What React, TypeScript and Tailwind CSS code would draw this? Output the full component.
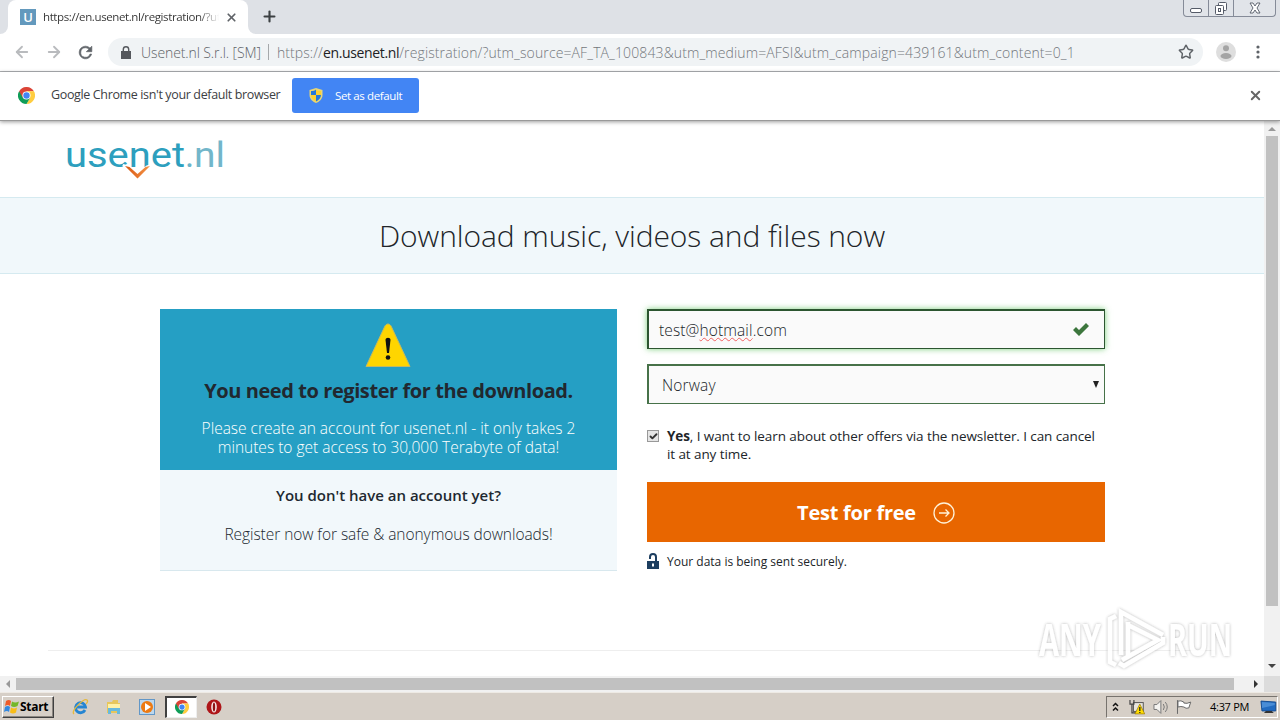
import type { ReactNode } from "react";
import { ArrowLeft, ArrowRight, Check, Plus, Star, X } from "lucide-react";

function ChromeLogo({ size }: { size: number }) {
  return (
    <svg width={size} height={size} viewBox="0 0 48 48" className="shrink-0">
      <path d="M24 24 3.2 12A24 24 0 0 1 44.8 12H24z" fill="#db4437" />
      <path d="M24 24 44.8 12A24 24 0 0 1 24 48L34.4 30z" fill="#ffcd40" />
      <path d="M3.2 12A24 24 0 0 0 24 48L34.4 30 24 24z" fill="#0f9d58" />
      <path d="M24 12H44.8L46 16 34.4 30z" fill="#ffcd40" />
      <path d="M3.2 12 13.6 30 24 24V12z" fill="#db4437" />
      <circle cx="24" cy="24" r="11.5" fill="#fff" />
      <circle cx="24" cy="24" r="9" fill="#4285f4" />
    </svg>
  );
}

function TabStrip() {
  return (
    <div className="flex h-[34px] items-start bg-[#dee1e6]">
      <div className="flex h-[34px] w-2 items-end bg-white">
        <div className="h-full w-full rounded-br-lg bg-[#dee1e6]" />
      </div>
      <div className="flex h-full w-[240px] items-center rounded-t-lg bg-white pl-3">
        <div className="flex size-4 shrink-0 items-center justify-center bg-[#6399bd] text-[13px] leading-4 font-semibold text-white">
          U
        </div>
        <div className="ml-[7px] w-[176px] overflow-hidden bg-gradient-to-r from-[#333] from-88% to-white bg-clip-text text-[11.5px] tracking-[-0.39px] whitespace-nowrap text-transparent">
          https://en.usenet.nl/registration/?ut
        </div>
        <X size={13} strokeWidth={3.2} className="ml-[6px] shrink-0 text-[#5f6368]" />
      </div>
      <div className="h-full w-2 bg-white">
        <div className="h-full w-full rounded-bl-lg bg-[#dee1e6]" />
      </div>
      <Plus size={17} strokeWidth={3} className="mt-2 ml-[5px] text-[#3c4043]" />
      <div className="mr-1 ml-auto flex h-[17px] w-[93px] rounded-b border border-t-0 border-[#858b98] bg-[#e1e4e9]">
        <div className="flex w-[25px] justify-center border-r border-[#858b98]">
          <svg width="14" height="16" fill="#fff" stroke="#555b68">
            <rect x="1.5" y="8.5" width="11" height="4" rx="1.5" />
          </svg>
        </div>
        <div className="flex w-[25px] justify-center border-r border-[#858b98]">
          <svg width="16" height="16" fill="#fff" stroke="#555b68">
            <rect x="5.5" y="2.5" width="8" height="8" rx="1" />
            <rect x="2.5" y="5.5" width="8" height="9" rx="1" />
            <rect x="5.5" y="8.5" width="2" height="3" />
          </svg>
        </div>
        <div className="flex flex-1 justify-center">
          <svg width="14" height="16" fill="#fff" stroke="#555b68" strokeWidth=".9">
            <path d="M2 3h3l2 3 2-3h3L9 8l3 5H9l-2-3-2 3H2l3-5z" />
          </svg>
        </div>
      </div>
    </div>
  );
}

function Toolbar() {
  return (
    <div className="flex h-[38px] items-center border-b border-[#b0b2b5] bg-white pb-px">
      <ArrowLeft size={18} strokeWidth={2.4} className="ml-[13px] text-[#b9bbbe]" />
      <ArrowRight size={18} strokeWidth={2.4} className="ml-[14px] text-[#b9bbbe]" />
      <svg width="19" height="19" viewBox="0 0 24 24" className="ml-[13px]" fill="#5f6368">
        <path
          d="M17.65 6.35A7.96 7.96 0 0 0 12 4a8 8 0 1 0 7.73 10h-2.08A6 6 0 1 1 12 6c1.66 0 3.14.69 4.22 1.78L13 11h7V4z"
          stroke="#5f6368"
          strokeWidth=".8"
        />
      </svg>
      <div className="ml-[13px] flex h-7 w-[1095px] items-center rounded-full bg-[#f0f3f5] pl-[13px] text-[14px] font-light whitespace-nowrap text-[#73777c]">
        <svg width="10" height="13" viewBox="0 0 10 13" fill="#55585d">
          <path d="M0 5h10v8H0z" />
          <path d="M2.3 6V3.4a2.7 2.7 0 0 1 5.4 0V6" fill="none" stroke="#55585d" strokeWidth="1.4" />
        </svg>
        <span className="ml-[10px] w-[127px] tracking-[-0.1px] text-[#5f6368]">Usenet.nl S.r.l. [SM]</span>
        <span className="h-4 w-px bg-[#a5a8ab]" />
        <span className="ml-2 tracking-[0.07px]">
          https://<span className="font-normal tracking-[-0.35px] text-[#202124]">en.usenet.nl</span>
          <span className="tracking-[0.12px]">
            /registration/?utm_source=AF_TA_100843&amp;utm_medium=AFSI&amp;utm_campaign=439161&amp;utm_content=0_1
          </span>
        </span>
        <Star size={16} strokeWidth={2.2} className="mr-[9px] ml-auto text-[#5f6368]" />
      </div>
      <svg width="20" height="20" className="ml-[13px]" fill="#a4a4a4">
        <circle cx="10" cy="10" r="10" fill="#dedede" />
        <circle cx="10" cy="6.2" r="3" />
        <ellipse cx="10" cy="14" rx="5.5" ry="3" />
      </svg>
      <svg width="4" height="16" className="ml-[20px]" fill="#5f6368">
        <circle cx="2" cy="3" r="1.6" />
        <circle cx="2" cy="8" r="1.6" />
        <circle cx="2" cy="13" r="1.6" />
      </svg>
    </div>
  );
}

function InfoBar() {
  return (
    <div className="relative z-10 flex h-[49px] items-center border-b border-[#999] bg-white pb-px pl-[18px] text-[12.5px] shadow-[0_1px_4px_rgba(0,0,0,0.4)]">
      <ChromeLogo size={17} />
      <span className="ml-4 w-[241px] tracking-[-0.36px] whitespace-nowrap text-[#3c4043]">
        Google Chrome isn't your default browser
      </span>
      <button className="flex h-[35px] w-[127px] items-center rounded-[3px] bg-[#4285f4] pl-[17px] text-[11.5px] text-white">
        <svg width="14" height="15" viewBox="0 0 14 15">
          <path d="M7 0 13.5 2V7C13.5 11 10 14 7 15 4 14 .5 11 .5 7V2z" fill="#e8d675" />
          <path d="M7 1.5V7H2V3C4 3 6 2.5 7 1.5z" fill="#2578d8" />
          <path d="M7 7h5c0 3-2 5-5 6.5z" fill="#2578d8" />
          <path d="M7 1.5C8 2.5 10 3 12 3v4H7z" fill="#ffd02e" />
          <path d="M2 7h5v6.5C4 12 2 10 2 7z" fill="#ffd02e" />
        </svg>
        <span className="ml-3 tracking-[-0.38px] whitespace-nowrap">Set as default</span>
      </button>
      <X size={15} strokeWidth={3} className="mr-[17px] ml-auto text-[#666]" />
    </div>
  );
}

function UsenetLogo() {
  return (
    <svg
      width="180"
      height="50"
      viewBox="0 0 180 50"
      className="mt-[10px] ml-[64px] font-[Roboto,sans-serif] text-[35px]"
    >
      <defs>
        <linearGradient id="tick">
          <stop offset="0" stopColor="#d95712" />
          <stop offset="1" stopColor="#f59547" />
        </linearGradient>
      </defs>
      <text x="1" y="35" textLength="120" lengthAdjust="spacingAndGlyphs" fill="#2d9fbe">
        usenet
      </text>
      <text x="121" y="35" fill="#6db4c9">.</text>
      <text x="130" y="35" textLength="31" lengthAdjust="spacingAndGlyphs" fill="#72b6ca">
        nl
      </text>
      <path d="m59 33 14.500 14L88 33l-5 1.500-9.500 8-9-8z" fill="#fff" stroke="#fff" strokeWidth="2" />
      <path d="m61 34 12.500 12.500L86 34l-4.500 1-8 7-8-7z" fill="url(#tick)" />
    </svg>
  );
}

function NoticeCard() {
  return (
    <div className="h-[262px] w-[457px] border-b border-[#d8e8ee] bg-[#f2f8fb] text-center text-[#212830]">
      <div className="flex h-[161px] flex-col items-center bg-[#259fc4] pt-[14px]">
        <svg width="46" height="45" viewBox="0 0 46 45" className="mr-px">
          <path
            d="M23 1c1.500 0 2.500 1 3.200 2.300L45 43.500H1L19.800 3.300C20.500 2 21.500 1 23 1z"
            fill="#ffd500"
            stroke="#c4b960"
          />
          <path d="M20.500 17c0-3 5-3 5 0l-1.500 13h-2z" fill="#111" />
          <circle cx="23" cy="34.500" r="2.300" fill="#111" />
        </svg>
        <h2 className="mt-[9px] text-[20px] leading-7 font-bold tracking-[-0.42px] whitespace-nowrap">
          You need to register for the download.
        </h2>
        <p className="mt-[14px] text-[15.5px] leading-[19px] font-light whitespace-nowrap text-white">
          Please create an account for usenet.nl - it only takes 2
          <br />
          minutes to get access to 30,000 Terabyte of data!
        </p>
      </div>
      <p className="mt-[14px] text-[15px] leading-[22px] font-semibold whitespace-nowrap">
        You don't have an account yet?
      </p>
      <p className="mt-[17px] text-[15.5px] leading-[22px] font-light tracking-[-0.06px] whitespace-nowrap">
        Register now for safe &amp; anonymous downloads!
      </p>
    </div>
  );
}

function SignupForm() {
  return (
    <div className="flex w-[458px] flex-col text-[15.5px] text-[#212529]">
      <div className="flex h-10 items-center border border-t-2 border-l-2 border-[#2c5530] bg-[#fafafa] pr-[15px] pl-[10px] font-light shadow-[0_0_6px_rgba(92,196,92,0.8)]">
        <span className="mt-[2px] tracking-[0.12px] whitespace-nowrap">
          test@
          <span className="underline decoration-[#f06060] decoration-wavy decoration-1 underline-offset-1">
            hotmail
          </span>
          .com
        </span>
        <svg width="16" height="13" viewBox="0 0 16 13" className="ml-auto" fill="#3c763d">
          <path d="m0 7 3-3 3 3L13 0l3 3L6 13z" />
        </svg>
      </div>
      <div className="mt-[15px] flex h-10 items-center border border-t-2 border-l-2 border-[#477249] bg-[#fafafa] pr-[5px] pl-[13px] font-light">
        <span className="mt-[2px] tracking-[0.15px]">Norway</span>
        <svg width="6" height="7" className="ml-auto" fill="#222">
          <path d="M0 0h6L3 7z" />
        </svg>
      </div>
      <div className="mt-[23px] flex">
        <div className="mt-[3px] flex size-3 shrink-0 items-center justify-center border border-[#999] bg-[#e6e6e6]">
          <Check size={9} strokeWidth={5} className="text-[#333]" />
        </div>
        <p className="ml-2 text-[13.5px] leading-[18px] tracking-[-0.09px] whitespace-nowrap">
          <b>Yes</b>, I want to learn about other offers via the newsletter. I can cancel
          <br />
          it at any time.
        </p>
      </div>
      <button className="mt-[19px] flex h-[60px] items-center justify-center bg-[#e86600] text-[20px] font-bold text-white">
        <span className="mt-px tracking-[-0.25px] whitespace-nowrap">Test for free</span>
        <svg
          width="22"
          height="22"
          viewBox="0 0 22 22"
          fill="none"
          stroke="#fff2d8"
          strokeWidth="1.3"
          className="mt-px ml-[17px]"
        >
          <circle cx="11" cy="11" r="10" />
          <path d="M6 11h10M12.5 7.5 16 11l-3.500 3.500" />
        </svg>
      </button>
      <div className="mt-[10px] flex items-center text-[12px] leading-[18px]">
        <svg width="12" height="16" viewBox="0 0 12 16" className="-mt-px">
          <path d="M3 6V4a3 3 0 0 1 6 0v4" fill="none" stroke="#1d3e60" strokeWidth="2" />
          <path d="M0 8h12v8H0z" fill="#1d3e60" />
          <path d="M5 10.500h2v3H5z" fill="#fff" />
        </svg>
        <span className="mt-px ml-2 whitespace-nowrap">Your data is being sent securely.</span>
      </div>
    </div>
  );
}

function Watermark() {
  return (
    <svg width="210" height="70" viewBox="0 0 210 70" className="absolute top-[484px] left-[1034px]">
      <defs>
        <filter id="soft" x="-10%" y="-10%" width="120%" height="120%">
          <feDropShadow dx="0" dy="0" stdDeviation="1.800" floodColor="#777" floodOpacity=".6" />
        </filter>
      </defs>
      <g filter="url(#soft)" fill="#fff" fontSize="45" fontWeight="700" opacity=".9">
        <text x="5" y="51" textLength="62" lengthAdjust="spacingAndGlyphs">ANY</text>
        <text x="134" y="51" textLength="64" lengthAdjust="spacingAndGlyphs">RUN</text>
        <path
          d="M82 11 76 14v43l6 3M87 50V7l42 23M94 17v36M94 20l30 15-36 20M129 32v6L90 61l-5-3"
          fill="none"
          stroke="#fff"
          strokeWidth="4.500"
        />
      </g>
    </svg>
  );
}

function Page() {
  return (
    <div className="relative h-[555px] w-[1264px] shrink-0 bg-white">
      <div className="h-[76px] pt-px">
        <UsenetLogo />
      </div>
      <div className="flex h-[77px] items-center justify-center border-y border-[#d5eaf0] bg-[#f1f8fb]">
        <h1 className="text-[30px] font-light tracking-[-0.08px] whitespace-nowrap text-[#212529]">
          Download music, videos and files now
        </h1>
      </div>
      <div className="mt-[35px] ml-[160px] flex gap-[30px]">
        <NoticeCard />
        <SignupForm />
      </div>
      <div className="mt-[79px] ml-12 h-px w-[1167px] bg-[#eee]" />
      <Watermark />
    </div>
  );
}

function VerticalScrollbar() {
  return (
    <div className="flex w-4 flex-col items-center bg-[#f1f1f1]">
      <svg width="8" height="15" fill="#999">
        <path d="m0 10 4-4 4 4z" />
      </svg>
      <div className="h-[470px] w-3 bg-[#c1c1c1]" />
      <svg width="8" height="5" className="mt-auto mb-[7px]" fill="#444">
        <path d="M0 0h8L4 4z" />
      </svg>
    </div>
  );
}

function HorizontalScrollbar() {
  return (
    <div className="flex h-4 items-center bg-[#f1f1f1]">
      <svg width="16" height="8" fill="#999">
        <path d="M10 0v8L6 4z" />
      </svg>
      <div className="h-3 w-[1218px] bg-[#c1c1c1]" />
      <svg width="5" height="8" className="ml-5" fill="#333">
        <path d="M0 0v8l4-4z" />
      </svg>
      <div className="ml-auto h-4 w-4 bg-[#dcdcdc]" />
    </div>
  );
}

function TaskIcon({ children, active }: { children: ReactNode; active?: boolean }) {
  return (
    <div
      className={
        active
          ? "flex h-[22px] w-[32px] items-center justify-center border border-t-2 border-l-2 border-t-[#404040] border-r-[#eee] border-b-[#eee] border-l-[#404040] bg-white"
          : "flex h-[22px] w-[33px] items-center justify-center"
      }
    >
      {children}
    </div>
  );
}

function Taskbar() {
  return (
    <div className="flex h-7 items-center border-t border-[#eeeae4] bg-[#d6cfc7]">
      <div className="ml-[2px] flex h-[22px] w-[52px] items-center border border-t-white border-r-[#404040] border-b-[#404040] border-l-white pl-[1px] text-[12px] font-bold text-black shadow-[inset_-1px_-1px_#8b8680]">
        <svg width="16" height="15" viewBox="0 0 16 15" className="shrink-0">
          <path d="M2 2q3-2 5 0L6 7Q4 5 1 7z" fill="#ee5b29" />
          <path d="M8 2.500q3 2 7 0L13.500 7Q10 9 7 7z" fill="#74b72b" />
          <path d="M1 8q3-2 5 0l-1 5q-2-2-5 0z" fill="#3288e0" />
          <path d="M7 8.500q3 2 6 0l-1 5q-3 2-6 0z" fill="#f9bd17" />
        </svg>
        <span className="tracking-[-0.3px]">Start</span>
      </div>
      <div className="ml-[10px] flex items-center">
        <TaskIcon>
          <svg width="17" height="16" viewBox="0 0 17 16" fill="none">
            <path d="M13 11a5 5 0 1 1 .5-3H5" stroke="#2585d2" strokeWidth="2.8" />
            <path d="M2 15C-2 12 12-1 15 1c1 1 0 3-1 4" stroke="#e6b93c" strokeWidth="1.3" />
          </svg>
        </TaskIcon>
        <TaskIcon>
          <svg width="16" height="16" viewBox="0 0 16 16">
            <path d="M1 3h5l1-2h5v3h2v10H1z" fill="#e7c65b" />
            <path d="M2 5h12v5H2z" fill="#fff1a6" />
            <path d="M2 9h12v6h-3v-3H5v3H2z" fill="#69b9dc" />
          </svg>
        </TaskIcon>
        <TaskIcon>
          <svg width="16" height="16" viewBox="0 0 16 16">
            <rect x=".5" y=".5" width="15" height="15" fill="#bcd7ed" stroke="#6297c7" />
            <circle cx="8" cy="8" r="6" fill="#ed7a12" />
            <path d="m6 4 6 4-6 4z" fill="#fff" />
          </svg>
        </TaskIcon>
        <div className="ml-[2px]">
          <TaskIcon active>
            <ChromeLogo size={14} />
          </TaskIcon>
        </div>
        <TaskIcon>
          <svg width="16" height="16" viewBox="0 0 16 16">
            <circle cx="8" cy="8" r="7.5" fill="#ae1518" />
            <ellipse cx="8" cy="8" rx="2.8" ry="5.5" fill="#f8eaea" />
            <ellipse cx="8" cy="8" rx="1.2" ry="4.5" fill="#8e1214" />
          </svg>
        </TaskIcon>
      </div>
      <div className="mr-[2px] ml-auto flex h-[22px] w-[172px] items-center border border-t-[#77736e] border-r-white border-b-white border-l-[#77736e] pl-[5px] text-[11px] text-black">
        <svg width="7" height="10" fill="none" stroke="#111" strokeWidth="1.500">
          <path d="m1 4 2.500-2.500L6 4M1 8.500 3.500 6 6 8.500" />
        </svg>
        <svg width="16" height="16" viewBox="0 0 16 16" className="ml-[10px]">
          <rect x="4.500" y="3.500" width="10" height="9" fill="#e8e5de" stroke="#555" />
          <path d="M1 1v4h4V1M3 5v9h5" fill="none" stroke="#444" strokeWidth="1.200" />
          <path d="m11 5 5 10H6z" fill="#ffdc00" stroke="#96760b" strokeWidth=".7" />
          <path d="M11 8v4m0 1v1" stroke="#222" strokeWidth="1.300" />
        </svg>
        <svg width="17" height="16" viewBox="0 0 17 16" className="ml-[8px]" fill="#f4f3f0" stroke="#777">
          <path d="M1 5.500h3l4-4v13l-4-4H1z" />
          <path d="M10.500 5q2 3 0 6M12.500 3q4 5 0 10" fill="none" />
        </svg>
        <svg width="17" height="16" viewBox="0 0 17 16" className="ml-[7px]" fill="#fff" stroke="#666">
          <path d="M1.500 1v14M2 2q3-1 6 1v1q3 1 7-1l-2 6q-3 1-5-1-3-1-6 0z" />
        </svg>
        <span className="mt-px ml-[17px] w-[45px] tracking-[-0.3px] whitespace-nowrap">4:37 PM</span>
        <svg width="17" height="14" viewBox="0 0 17 14" className="ml-[6px]">
          <path d="m1 1 15 1v9H2z" fill="#226bc0" stroke="#164c91" />
          <path d="M2 2l13 1v2L2 8z" fill="#4a8dd6" />
          <path d="m6 11 6 0 2 2H4z" fill="#333" />
        </svg>
      </div>
    </div>
  );
}

export default function App() {
  return (
    <div className="flex h-[720px] w-[1280px] flex-col overflow-hidden bg-white font-['Open_Sans',sans-serif]">
      <TabStrip />
      <Toolbar />
      <InfoBar />
      <div className="flex h-[555px]">
        <Page />
        <VerticalScrollbar />
      </div>
      <HorizontalScrollbar />
      <Taskbar />
    </div>
  );
}
